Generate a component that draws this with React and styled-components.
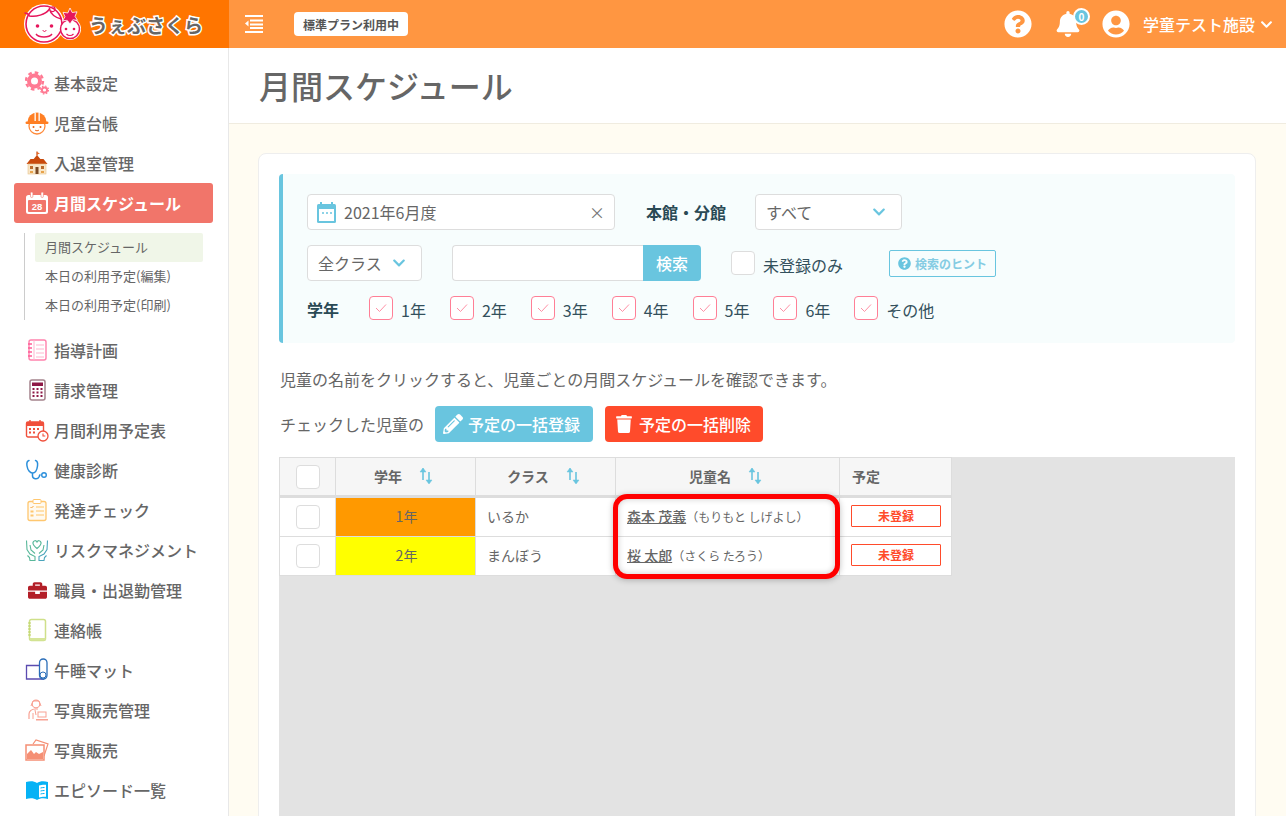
import React from 'react'
import styled, { createGlobalStyle } from 'styled-components'
import { FaQuestionCircle, FaBell, FaUserCircle, FaPencilAlt, FaTrash, FaChevronDown, FaBriefcase } from 'react-icons/fa'

const Global = createGlobalStyle`
html,body{margin:0;padding:0;height:100%;overflow:hidden;}
body{font-family:"Noto Sans CJK JP","Noto Sans",sans-serif;color:#666;background:#fff;}
*{box-sizing:border-box;}
`

const Logo = () => (
  <svg width="58" height="46" viewBox="0 0 58 46">
    <circle cx="20" cy="23" r="20" fill="#fff" />
    <circle cx="46" cy="28" r="11" fill="#fff" />
    <circle cx="20" cy="23" r="18" fill="#fff" stroke="#e6175c" strokeWidth="1.6" />
    <path d="M0.500 12c3 0 4 1 5 3 6 1 16-1 20-7 1 5 6 9 12 10" fill="none" stroke="#e6175c" strokeWidth="1.400" />
    <path d="M25 8c2-3 6-3 6 0s-3 3-4 2" fill="none" stroke="#e6175c" strokeWidth="1.200" />
    <circle cx="13.500" cy="25" r="1.800" fill="#e6175c" />
    <circle cx="27.500" cy="25" r="1.800" fill="#e6175c" />
    <path d="M19 29c0 2 3 2 3 0" fill="none" stroke="#e6175c" strokeWidth="1" />
    <path d="M12 33c3 4 13 4 16 0" fill="none" stroke="#e6175c" strokeWidth="1.400" />
    <circle cx="46" cy="28" r="9.500" fill="#fff" stroke="#e6175c" strokeWidth="1.500" />
    <circle cx="42" cy="28" r="1.300" fill="#e6175c" />
    <circle cx="50" cy="28" r="1.300" fill="#e6175c" />
    <path d="M42.500 33c2 2 5 2 7 0" fill="none" stroke="#e6175c" strokeWidth="1.200" />
    <path d="M46 7l2.200 4.500 4.800-.7-2 4.500 2.500 4-4.700-.5L46 23l-2.800-3.700-4.700.5 2.500-4-2-4.500 4.800.7z" fill="#e6175c" stroke="#fff" strokeWidth=".8" />
  </svg>
)

const MenuToggle = () => (
  <svg width="20" height="20" viewBox="0 0 20 20" fill="#fff">
    <rect x="1" y="1" width="18" height="2" />
    <rect x="6" y="5.500" width="13" height="2" />
    <rect x="6" y="9.500" width="13" height="2" />
    <rect x="6" y="13" width="13" height="2" />
    <rect x="1" y="17" width="18" height="2" />
    <path d="M4.500 6.500v6L1 9.500z" />
  </svg>
)

const IconBox = ({ children }) => (
  <svg width="24" height="24" viewBox="0 0 24 24">{children}</svg>
)

const GearIcon = () => (
  <IconBox>
    <circle cx="9.500" cy="10" r="5.500" fill="none" stroke="#ff7a93" strokeWidth="4" />
    <circle cx="9.500" cy="10" r="8.500" fill="none" stroke="#ff7a93" strokeWidth="2.400" strokeDasharray="3.600 3.070" />
    <circle cx="19.500" cy="19" r="2.600" fill="none" stroke="#ff7a93" strokeWidth="2" />
    <circle cx="19.500" cy="19" r="4" fill="none" stroke="#ff7a93" strokeWidth="1.200" strokeDasharray="1.600 1.540" />
  </IconBox>
)
const KidIcon = () => (
  <IconBox>
    <circle cx="12" cy="15" r="8" fill="#fff" stroke="#ff8a3a" strokeWidth="1.300" />
    <path d="M2.500 11a9.500 9.500 0 0 1 19 0z" fill="#ff7f24" />
    <rect x="0.500" y="10.500" width="23" height="2.400" rx="1.200" fill="#ff7f24" />
    <rect x="9.500" y="2" width="1.300" height="8" fill="#fff" />
    <rect x="13.500" y="2" width="1.300" height="8" fill="#fff" />
    <circle cx="8.500" cy="16" r="1" fill="#e8641a" />
    <circle cx="15.500" cy="16" r="1" fill="#e8641a" />
    <path d="M10 19c1 1 3 1 4 0" fill="none" stroke="#e8641a" />
  </IconBox>
)
const SchoolIcon = () => (
  <IconBox>
    <path d="M12 .500v4" stroke="#c94a0c" strokeWidth="1.200" />
    <path d="M12 1l3 1.500-3 1z" fill="#e86a2a" />
    <path d="M12 4l5 6H7z" fill="#c94a0c" />
    <path d="M1.500 13l4-5h13l4 5z" fill="#c94a0c" />
    <rect x="3" y="13" width="18" height="10" fill="#f8e6c8" stroke="#e8c48a" strokeWidth=".6" />
    <rect x="5" y="15" width="3" height="3" fill="#b96b2a" />
    <rect x="16" y="15" width="3" height="3" fill="#b96b2a" />
    <rect x="10.500" y="16" width="3" height="7" fill="#7c4b24" />
    <rect x="5" y="20" width="3" height="2" fill="#e8a24a" />
    <rect x="16" y="20" width="3" height="2" fill="#e8a24a" />
  </IconBox>
)
const CalendarActive = () => (
  <IconBox>
    <rect x="1" y="4" width="22" height="19" rx="2.500" fill="#fff" />
    <rect x="3" y="9" width="18" height="12" rx="1" fill="#f1756a" />
    <rect x="5.500" y="1" width="2.400" height="5.500" rx="1.200" fill="#fff" stroke="#f1756a" strokeWidth=".6" />
    <rect x="16" y="1" width="2.400" height="5.500" rx="1.200" fill="#fff" stroke="#f1756a" strokeWidth=".6" />
    <text x="12" y="19" textAnchor="middle" fontSize="9.500" fontWeight="700" fill="#fff" fontFamily="Liberation Sans">28</text>
  </IconBox>
)
const NotebookIcon = () => (
  <IconBox>
    <rect x="4" y="2" width="17" height="20" rx="2" fill="#fff" stroke="#ff82ad" strokeWidth="1.400" />
    <path d="M9 2v20M11 7h8M11 11h8M11 15h8M11 19h8" stroke="#ffb5cf" strokeWidth="1" />
    <path d="M3 6h4M3 10h4M3 14h4M3 18h4" stroke="#ff5c96" strokeWidth="1.300" />
  </IconBox>
)
const CalcIcon = () => (
  <IconBox>
    <rect x="5" y="2" width="15" height="20" rx="2" fill="#fff" stroke="#a4838c" strokeWidth="1.500" />
    <rect x="7" y="4.500" width="11" height="3.500" fill="#8e1846" />
    <path d="M7.500 11h2M11.500 11h2M15.500 11h2M7.500 14.500h2M11.500 14.500h2M15.500 14.500h2M7.500 18h2M11.500 18h2M15.500 18h2" stroke="#8e1846" strokeWidth="2" />
  </IconBox>
)
const CalClockIcon = () => (
  <IconBox>
    <rect x="1.500" y="4" width="17" height="15" rx="1.500" fill="#fff" stroke="#f0503c" strokeWidth="1.400" />
    <rect x="1.500" y="4" width="17" height="4" fill="#f0503c" />
    <path d="M5 2v4M15 2v4" stroke="#f0503c" strokeWidth="1.400" />
    <path d="M4 11h2M8 11h2M12 11h2M4 14.500h2M8 14.500h2" stroke="#f0503c" strokeWidth="2" />
    <circle cx="18" cy="18" r="5" fill="#fff" stroke="#f0503c" strokeWidth="1.300" />
    <path d="M18 15.500V18h2.300" fill="none" stroke="#f0503c" strokeWidth="1.100" />
  </IconBox>
)
const StethoIcon = () => (
  <IconBox>
    <path d="M4 2.500C2 3 1.500 5 2 8c.6 4 3 7 5.500 7s4.500-3 5-7c.4-3 0-5-2-5.500" fill="none" stroke="#2b8fdb" strokeWidth="1.500" strokeLinecap="round" />
    <path d="M7.500 15v3c0 3 5 4 6.500 1 .7-1.500.5-2 1.500-2.500" fill="none" stroke="#2b8fdb" strokeWidth="1.500" />
    <circle cx="19" cy="17" r="2.300" fill="#fff" stroke="#2b8fdb" strokeWidth="1.400" />
  </IconBox>
)
const ClipboardIcon = () => (
  <IconBox>
    <rect x="3" y="3.500" width="18" height="19" rx="2" fill="#fffaf0" stroke="#ffc76f" strokeWidth="1.300" />
    <rect x="8" y="1.500" width="8" height="4" rx="1" fill="#fff" stroke="#ffc76f" />
    <path d="M11 9h8M11 13h8M11 17h8" stroke="#ffd795" strokeWidth="1.300" />
    <path d="M5.500 9l1 1 2-2" fill="none" stroke="#f5a742" />
    <rect x="5.500" y="12.500" width="3" height="2" fill="#ffc76f" />
    <rect x="5.500" y="16.500" width="3" height="2" fill="#ffc76f" />
  </IconBox>
)
const HandsIcon = () => (
  <IconBox>
    <path d="M12 10.500C9 8 7.500 6.500 8 4.500c.5-2 3-2.500 4-.5 1-2 3.500-1.500 4 .5.500 2-1 3.500-4 6z" fill="#fff" stroke="#59b89a" strokeWidth="1.200" />
    <path d="M1.500 2.500l.5 9 3 4.500 5 2.500v4H5l-.5-3-2-2" fill="none" stroke="#59b89a" strokeWidth="1.100" />
    <path d="M22.500 2.500l-.5 9-3 4.500-5 2.500v4h5l.5-3 2-2" fill="none" stroke="#4aa4bb" strokeWidth="1.100" />
    <path d="M5 7l1 5 4 3.500M19 7l-1 5-4 3.500" fill="none" stroke="#59b89a" strokeWidth="1.100" />
  </IconBox>
)
const CaseIcon = () => <FaBriefcase size={19} color="#b31f28" />
const RingNoteIcon = () => (
  <IconBox>
    <rect x="4.500" y="1.500" width="16" height="21" rx="2" fill="#fff" stroke="#cfe08a" strokeWidth="1.500" />
    <rect x="5" y="20" width="15.500" height="2.500" fill="#d6e59a" />
    <path d="M3 5h3M3 8h3M3 11h3M3 14h3M3 17h3" stroke="#bcd25f" strokeWidth="1.200" />
  </IconBox>
)
const MatIcon = () => (
  <IconBox>
    <path d="M19 7.500H1.500v13.500H19" fill="none" stroke="#5b4bb0" strokeWidth="1.300" />
    <rect x="14.500" y="1" width="7.500" height="20" rx="3.700" fill="#fff" stroke="#2a6db8" strokeWidth="1.300" />
    <circle cx="18" cy="17" r="3" fill="#fff" stroke="#2a6db8" strokeWidth="1" />
  </IconBox>
)
const SellerIcon = () => (
  <IconBox>
    <circle cx="11" cy="6" r="3.800" fill="#fff" stroke="#f8a193" strokeWidth="1.200" />
    <path d="M6 8l2-5h6l2 5" fill="none" stroke="#f8a193" />
    <path d="M4 21v-5c0-3 3-5 6-5h3" fill="none" stroke="#f8a193" strokeWidth="1.200" />
    <path d="M8 21v-6M10 12l1 5" stroke="#f8a193" />
    <rect x="13" y="14" width="8" height="5" fill="#fff" stroke="#f8a193" />
    <rect x="11" y="21" width="12" height="1.500" fill="#f8a193" />
  </IconBox>
)
const PhotoIcon = () => (
  <IconBox>
    <path d="M8 6l3-4 12 4-4 12" fill="#fff" stroke="#f58f74" strokeWidth="1.200" />
    <rect x="1" y="7" width="18" height="15" fill="#fff" stroke="#f58f74" strokeWidth="1.500" />
    <path d="M2 21v-5l4-4 3 4 2-2 3 2 4-2v7z" fill="#f58f74" />
  </IconBox>
)
const BookIcon = () => (
  <IconBox>
    <path d="M1 4c4-1 8-1 11 1v17c-3-2-7-2-11-1z" fill="#06b2f5" />
    <path d="M23 4c-4-1-8-1-11 1v17c3-2 7-2 11-1z" fill="#06b2f5" />
    <path d="M14 7.500c2-.7 5-1 7-.7v12c-2-.3-5 0-7 .7z" fill="#fff" />
    <path d="M15.500 10c1.500-.4 3-.6 4-.5M15.500 13c1.500-.4 3-.6 4-.5M15.500 16c1.500-.4 3-.6 4-.5" stroke="#06b2f5" strokeWidth="1" />
  </IconBox>
)
const CalendarSmall = () => (
  <svg width="19" height="21" viewBox="0 0 19 21">
    <rect x="0" y="2" width="19" height="19" rx="1.500" fill="#69c5df" />
    <rect x="3" y="0" width="2" height="4" fill="#69c5df" />
    <rect x="14" y="0" width="2" height="4" fill="#69c5df" />
    <rect x="2" y="7" width="15" height="12" fill="#fff" />
    <path d="M5 11h2M9 11h2M13 11h2" stroke="#69c5df" strokeWidth="1.500" />
  </svg>
)
const SortArrows = () => (
  <svg width="14" height="18" viewBox="0 0 14 18" fill="none" stroke="#69c5df">
    <path d="M4 13V1.500" strokeWidth="1.600" />
    <path d="M1 5l3-4 3 4z" fill="#69c5df" strokeWidth=".5" />
    <path d="M10 5v11" strokeWidth="1.600" />
    <path d="M7 13l3 4 3-4z" fill="#69c5df" strokeWidth=".5" />
  </svg>
)
const Tick = () => (
  <svg width="12" height="10" viewBox="0 0 12 10" fill="none" stroke="#ff8fa5" strokeWidth="1">
    <path d="M1 5l3.500 3.500L11 1.500" />
  </svg>
)

const navTop = [
  { label: '基本設定', icon: <GearIcon /> },
  { label: '児童台帳', icon: <KidIcon /> },
  { label: '入退室管理', icon: <SchoolIcon /> },
]
const navBottom = [
  { label: '指導計画', icon: <NotebookIcon /> },
  { label: '請求管理', icon: <CalcIcon /> },
  { label: '月間利用予定表', icon: <CalClockIcon /> },
  { label: '健康診断', icon: <StethoIcon /> },
  { label: '発達チェック', icon: <ClipboardIcon /> },
  { label: 'リスクマネジメント', icon: <HandsIcon /> },
  { label: '職員・出退勤管理', icon: <CaseIcon /> },
  { label: '連絡帳', icon: <RingNoteIcon /> },
  { label: '午睡マット', icon: <MatIcon /> },
  { label: '写真販売管理', icon: <SellerIcon /> },
  { label: '写真販売', icon: <PhotoIcon /> },
  { label: 'エピソード一覧', icon: <BookIcon /> },
]
const grades = ['1年', '2年', '3年', '4年', '5年', '6年', 'その他']

const App = () => {
  return (
    <Page>
      <Global />
      <Header>
        <LogoArea>
          <Logo />
          <LogoText>うぇぶさくら</LogoText>
        </LogoArea>
        <HeaderBar>
          <ToggleButton><MenuToggle /></ToggleButton>
          <PlanBadge>標準プラン利用中</PlanBadge>
          <HeaderRight>
            <FaQuestionCircle size={28} color="#fff" />
            <BellWrap>
              <FaBell size={26} color="#fff" />
              <BellCount>0</BellCount>
            </BellWrap>
            <FaUserCircle size={28} color="#fff" />
            <UserName>学童テスト施設</UserName>
            <FaChevronDown size={13} color="#fff" />
          </HeaderRight>
        </HeaderBar>
      </Header>
      <Body>
        <Sidebar>
          {navTop.map((n) => (
            <NavItem key={n.label}><NavIcon>{n.icon}</NavIcon>{n.label}</NavItem>
          ))}
          <NavActive><NavIcon><CalendarActive /></NavIcon>月間スケジュール</NavActive>
          <SubList>
            <SubItem $active>月間スケジュール</SubItem>
            <SubItem>本日の利用予定(編集)</SubItem>
            <SubItem>本日の利用予定(印刷)</SubItem>
          </SubList>
          {navBottom.map((n) => (
            <NavItem key={n.label}><NavIcon>{n.icon}</NavIcon>{n.label}</NavItem>
          ))}
        </Sidebar>
        <Main>
          <TitleBar><Title>月間スケジュール</Title></TitleBar>
          <Content>
            <Card>
              <FilterBox>
                <FilterRow>
                  <DateInput>
                    <CalendarSmall />
                    <DateText>2021年6月度</DateText>
                    <ClearMark>×</ClearMark>
                  </DateInput>
                  <BoldLabel>本館・分館</BoldLabel>
                  <SelectBox $width={147}>すべて<FaChevronDown size={14} color="#69c5df" /></SelectBox>
                </FilterRow>
                <FilterRow $top={15}>
                  <SelectBox $width={115}>全クラス<FaChevronDown size={14} color="#69c5df" /></SelectBox>
                  <SearchInput />
                  <SearchButton>検索</SearchButton>
                  <PlainCheck $left={30} />
                  <CheckText>未登録のみ</CheckText>
                  <HintButton>
                    <FaQuestionCircle size={13} color="#69c5df" />
                    検索のヒント
                  </HintButton>
                </FilterRow>
                <GradeRow>
                  <GradeLabel>学年</GradeLabel>
                  {grades.map((g) => (
                    <GradeItem key={g}>
                      <PinkCheck><Tick /></PinkCheck>
                      <GradeText>{g}</GradeText>
                    </GradeItem>
                  ))}
                </GradeRow>
              </FilterBox>
              <Note>児童の名前をクリックすると、児童ごとの月間スケジュールを確認できます。</Note>
              <ActionRow>
                <ActionText>チェックした児童の</ActionText>
                <ActionButton $bg="#69c5df" $pad={8} $gap={5}><FaPencilAlt size={20} />予定の一括登録</ActionButton>
                <ActionButton $bg="#ff4b2b" $pad={10} $gap={6}><FaTrash size={18} />予定の一括削除</ActionButton>
              </ActionRow>
              <TableArea>
                <Table>
                  <thead>
                    <tr>
                      <Th $w={57}><PlainCheck /></Th>
                      <Th $w={140}><HeadInner>学年<SortArrows /></HeadInner></Th>
                      <Th $w={140}><HeadInner>クラス<SortArrows /></HeadInner></Th>
                      <Th $w={224}><HeadInner>児童名<SortArrows /></HeadInner></Th>
                      <Th $w={112} $left>予定</Th>
                    </tr>
                  </thead>
                  <tbody>
                    <tr>
                      <Td><PlainCheck /></Td>
                      <Td $bg="#ff9900" $center>1年</Td>
                      <Td>いるか</Td>
                      <Td><ChildName>森本 茂義</ChildName><Kana>（もりもと しげよし）</Kana></Td>
                      <Td><StatusTag>未登録</StatusTag></Td>
                    </tr>
                    <tr>
                      <Td><PlainCheck /></Td>
                      <Td $bg="#ffff00" $center>2年</Td>
                      <Td>まんぼう</Td>
                      <Td><ChildName>桜 太郎</ChildName><Kana>（さくら たろう）</Kana></Td>
                      <Td><StatusTag>未登録</StatusTag></Td>
                    </tr>
                  </tbody>
                </Table>
                <Highlight />
              </TableArea>
            </Card>
          </Content>
        </Main>
      </Body>
    </Page>
  )
}

export default App

const Page = styled.div`
height:100vh;
display:flex;
flex-direction:column;
overflow:hidden;
`
const Header = styled.header`
height:48px;
display:flex;
flex-shrink:0;
`
const LogoArea = styled.div`
width:229px;
background:#ff7500;
display:flex;
align-items:center;
padding-left:24px;
gap:7px;
`
const LogoText = styled.span`
font-size:19px;
font-weight:700;
color:#666;
-webkit-text-stroke:3px #fff;
paint-order:stroke fill;
white-space:nowrap;
`
const HeaderBar = styled.div`
flex:1;
background:#ff9641;
display:flex;
align-items:center;
padding:0 13px 0 15px;
`
const ToggleButton = styled.div`
display:flex;
width:20px;
`
const PlanBadge = styled.div`
margin-left:30px;
background:#fff;
border-radius:4px;
height:24px;
width:114px;
display:flex;
align-items:center;
justify-content:center;
font-size:12px;
font-weight:700;
color:#555;
white-space:nowrap;
`
const HeaderRight = styled.div`
margin-left:auto;
display:flex;
align-items:center;
gap:22px;
`
const BellWrap = styled.div`
position:relative;
display:flex;
margin:0 -1px 0 1px;
`
const BellCount = styled.span`
position:absolute;
top:-3px;
right:-9px;
width:17px;
height:17px;
border-radius:50%;
background:#69c5df;
border:2px solid #fff;
color:#fff;
font-size:10px;
font-weight:700;
line-height:13px;
text-align:center;
`
const UserName = styled.span`
margin-left:-9px;
margin-right:-17px;
font-size:16px;
font-weight:500;
color:#fff;
white-space:nowrap;
`
const Body = styled.div`
flex:1;
display:flex;
min-height:0;
`
const Sidebar = styled.nav`
width:229px;
flex-shrink:0;
border-right:1px solid #e8e8e8;
padding:15px 15px 0 14px;
overflow:hidden;
`
const NavItem = styled.div`
height:40px;
display:flex;
align-items:center;
padding-left:11px;
gap:5px;
font-size:16px;
font-weight:500;
color:#666;
white-space:nowrap;
`
const NavIcon = styled.span`
width:24px;
height:24px;
display:flex;
align-items:center;
justify-content:center;
flex-shrink:0;
`
const NavActive = styled(NavItem)`
background:#f1756a;
border-radius:3px;
font-weight:700;
color:#fff;
`
const SubList = styled.div`
margin:10px 0 10px 10px;
padding-left:10px;
border-left:1px solid #ccc;
width:179px;
`
const SubItem = styled.div`
height:29px;
line-height:28px;
padding-left:10px;
font-size:13px;
border-radius:2px;
color:#666;
white-space:nowrap;
background:${(p) => (p.$active ? '#f0f6e8' : 'transparent')};
`
const Main = styled.main`
flex:1;
min-width:0;
display:flex;
flex-direction:column;
`
const TitleBar = styled.div`
height:76px;
flex-shrink:0;
background:#fff;
border-bottom:1px solid #f0ece0;
padding:0 0 2px 30px;
display:flex;
align-items:center;
`
const Title = styled.h1`
margin:0;
font-size:32px;
font-weight:500;
color:#666;
`
const Content = styled.div`
flex:1;
background:#fffcf2;
padding:29px 30px 0 29px;
min-height:0;
`
const Card = styled.div`
background:#fff;
border:1px solid #eee;
border-radius:8px;
padding:20px 20px 0;
height:900px;
`
const FilterBox = styled.div`
height:169px;
background:#f7fdfd;
border-left:4px solid #69c5df;
border-radius:4px;
padding:20px 24px;
`
const FilterRow = styled.div`
display:flex;
align-items:center;
height:36px;
margin-top:${(p) => p.$top || 0}px;
`
const DateInput = styled.div`
width:308px;
height:36px;
background:#fff;
border:1px solid #ddd;
border-radius:4px;
display:flex;
align-items:center;
padding:0 9px 0 9px;
`
const DateText = styled.span`
margin-left:8px;
font-size:16px;
color:#666;
flex:1;
`
const ClearMark = styled.span`
font-size:16px;
color:#777;
`
const BoldLabel = styled.span`
margin-left:31px;
width:109px;
font-size:16px;
font-weight:700;
color:#2a4a55;
white-space:nowrap;
`
const SelectBox = styled.div`
width:${(p) => p.$width}px;
height:36px;
background:#fff;
border:1px solid #ddd;
border-radius:4px;
display:flex;
align-items:center;
justify-content:space-between;
padding:0 15px 0 10px;
font-size:16px;
color:#666;
`
const SearchInput = styled.div`
margin-left:30px;
width:191px;
height:36px;
background:#fff;
border:1px solid #ddd;
border-right:none;
border-radius:4px 0 0 4px;
`
const SearchButton = styled.div`
width:58px;
height:36px;
background:#69c5df;
border-radius:0 4px 4px 0;
color:#fff;
font-size:16px;
font-weight:500;
display:flex;
align-items:center;
justify-content:center;
`
const PlainCheck = styled.span`
display:inline-block;
width:24px;
height:24px;
margin-left:${(p) => p.$left || 0}px;
background:#fff;
border:1px solid #ddd;
border-radius:4px;
vertical-align:middle;
flex-shrink:0;
`
const CheckText = styled.span`
margin-left:8px;
font-size:16px;
color:#33505c;
white-space:nowrap;
position:relative;
top:2px;
`
const HintButton = styled.div`
margin-left:46px;
width:107px;
height:27px;
border:1px solid #69c5df;
border-radius:2px;
display:flex;
align-items:center;
justify-content:center;
gap:4px;
font-size:12px;
font-weight:700;
color:#85cce3;
white-space:nowrap;
`
const GradeRow = styled.div`
display:flex;
align-items:center;
height:25px;
margin-top:14px;
`
const GradeLabel = styled.span`
width:62px;
font-size:16px;
font-weight:700;
color:#2a4a55;
position:relative;
top:1px;
`
const GradeItem = styled.div`
width:80.9px;
display:flex;
align-items:center;
`
const PinkCheck = styled.span`
width:24px;
height:24px;
background:#fff;
border:1px solid #ff7f96;
border-radius:4px;
display:flex;
align-items:center;
justify-content:center;
flex-shrink:0;
`
const GradeText = styled.span`
margin-left:8px;
font-size:16px;
color:#33505c;
white-space:nowrap;
position:relative;
top:2px;
`
const Note = styled.p`
margin:24px 0 0 1px;
font-size:16px;
line-height:24px;
color:#666;
white-space:nowrap;
`
const ActionRow = styled.div`
margin-top:15px;
display:flex;
align-items:center;
`
const ActionText = styled.span`
margin:0 -1px 0 1px;
font-size:16px;
color:#666;
white-space:nowrap;
`
const ActionButton = styled.div`
margin-left:12px;
height:36px;
width:158px;
background:${(p) => p.$bg};
border-radius:4px;
color:#fff;
font-size:16px;
font-weight:500;
display:flex;
align-items:center;
padding-left:${(p) => p.$pad}px;
gap:${(p) => p.$gap}px;
white-space:nowrap;
`
const TableArea = styled.div`
position:relative;
margin-top:15px;
height:500px;
background:#e3e3e3;
`
const Table = styled.table`
width:673px;
table-layout:fixed;
border-collapse:separate;
border-spacing:0;
font-size:14px;
color:#666;
`
const Th = styled.th`
width:${(p) => p.$w}px;
height:41px;
padding:0 12px 2px;
background:#f6f6f6;
border-top:1px solid #ddd;
border-right:1px solid #ddd;
border-bottom:3px solid #ddd;
font-size:14px;
font-weight:700;
color:#666;
text-align:${(p) => (p.$left ? 'left' : 'center')};
&:first-child{
  border-left:1px solid #ddd;
  padding:0;
}
`
const HeadInner = styled.span`
display:inline-flex;
align-items:center;
gap:17px;
margin-right:4px;
`
const Td = styled.td`
height:39px;
padding:0 9px 3px 11px;
background:${(p) => p.$bg || '#fff'};
border-right:1px solid #ddd;
border-bottom:1px solid #ddd;
text-align:${(p) => (p.$center ? 'center' : 'left')};
white-space:nowrap;
&:first-child{
  text-align:center;
  padding:0;
  border-left:1px solid #ddd;
}
`
const ChildName = styled.a`
text-decoration:underline;
color:#666;
font-weight:500;
`
const Kana = styled.span`
font-size:12px;
color:#666;
`
const StatusTag = styled.div`
width:90px;
height:22px;
border:1px solid #ff4b2b;
border-radius:1px;
background:#fff;
color:#ff4b2b;
font-size:12px;
font-weight:700;
display:flex;
align-items:center;
justify-content:center;
`
const Highlight = styled.div`
position:absolute;
left:334px;
top:37px;
width:227px;
height:85px;
border:5px solid #f00;
border-radius:14px;
box-shadow:0 1px 6px rgba(0,0,0,.25),inset 0 0 6px rgba(0,0,0,.2);
`
